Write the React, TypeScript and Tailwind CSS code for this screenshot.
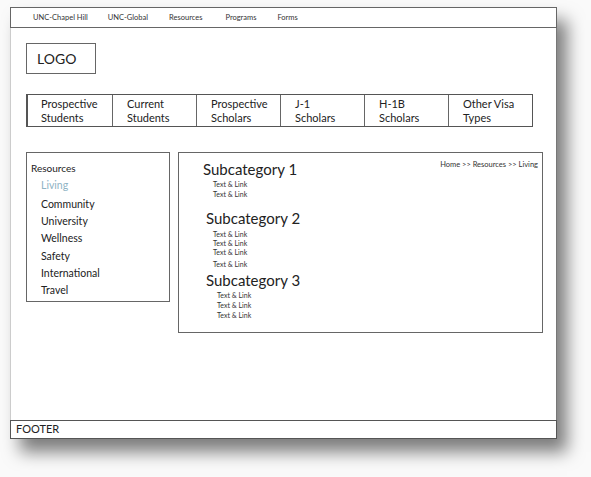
import React from "react";

const font = { fontFamily: "Lato, 'Noto Sans', sans-serif" };

export default function App() {
  const tabs = [
    ["Prospective", "Students"],
    ["Current", "Students"],
    ["Prospective", "Scholars"],
    ["J-1", "Scholars"],
    ["H-1B", "Scholars"],
    ["Other Visa", "Types"],
  ];
  return (
    <div className="w-[591px] h-[477px] bg-[#fafafa] overflow-hidden text-[#222]" style={font}>
      <div className="ml-[10px] mt-[7px] w-[547px] flex flex-col bg-white shadow-[10px_13px_16px_rgba(0,0,0,0.5)]">
        <div className="h-[21px] border border-[#666] flex items-center pl-[22px] text-[7.5px] text-[#333]">
          <span>UNC-Chapel Hill</span>
          <span className="ml-[20px]">UNC-Global</span>
          <span className="ml-[21px]">Resources</span>
          <span className="ml-[23px]">Programs</span>
          <span className="ml-[21px]">Forms</span>
        </div>
        <div className="h-[392px] border-l border-r border-l-[#ccc] border-r-[#777] flex flex-col pl-[15px]">
          <div className="mt-[15px] w-[70px] h-[31px] border border-[#666] flex items-center pl-[10px] text-[14px]">
            LOGO
          </div>
          <div className="mt-[20px] w-[507px] h-[33px] grid grid-cols-6 border border-[#555] border-l-2">
            {tabs.map((t, i) => (
              <div
                key={i}
                className={`flex flex-col justify-center text-[11px] leading-[14px] ${
                  i === 0 ? "pl-[13px]" : "pl-[14px] border-l border-[#666]"
                }`}
              >
                <span>{t[0]}</span>
                <span>{t[1]}</span>
              </div>
            ))}
          </div>
          <div className="mt-[25px] flex gap-[8px] items-start">
            <div className="w-[144px] h-[150px] border border-[#666] pt-[8px] pl-[4px]">
              <div className="text-[10px] leading-[14px]">Resources</div>
              <div className="pl-[10px] text-[10.5px] flex flex-col">
                <span className="text-[#8fb3c4] leading-[17px] mt-[2px]">Living</span>
                <span className="leading-[17px] mt-[2px]">Community</span>
                <span className="leading-[16px]">University</span>
                <span className="leading-[17px] mt-[1px]">Wellness</span>
                <span className="leading-[17px] mt-[1px]">Safety</span>
                <span className="leading-[16px]">International</span>
                <span className="leading-[17px] mt-[1px]">Travel</span>
              </div>
            </div>
            <div className="relative w-[365px] h-[181px] border border-[#666]">
              <div className="absolute right-[4px] top-[6px] text-[7.5px] text-[#333]">
                Home &gt;&gt; Resources &gt;&gt; Living
              </div>
              <div className="flex flex-col pl-[24px] pt-[6px]">
                <div className="text-[15px] leading-[20px]">Subcategory 1</div>
                <div className="pl-[10px] text-[7px] leading-[10px] flex flex-col text-[#333]">
                  <span>Text &amp; Link</span>
                  <span>Text &amp; Link</span>
                </div>
                <div className="text-[15px] leading-[20px] mt-[9px] pl-[3px]">Subcategory 2</div>
                <div className="pl-[10px] text-[7px] leading-[9px] flex flex-col mt-[2px] text-[#333]">
                  <span>Text &amp; Link</span>
                  <span>Text &amp; Link</span>
                  <span>Text &amp; Link</span>
                  <span className="mt-[3px]">Text &amp; Link</span>
                </div>
                <div className="text-[15px] leading-[20px] mt-[1px] pl-[3px]">Subcategory 3</div>
                <div className="pl-[14px] text-[7px] leading-[10px] flex flex-col text-[#333]">
                  <span>Text &amp; Link</span>
                  <span>Text &amp; Link</span>
                  <span>Text &amp; Link</span>
                </div>
              </div>
            </div>
          </div>
        </div>
        <div className="h-[19px] border border-[#555] flex items-center pl-[5px] text-[11px]">FOOTER</div>
      </div>
    </div>
  );
}
